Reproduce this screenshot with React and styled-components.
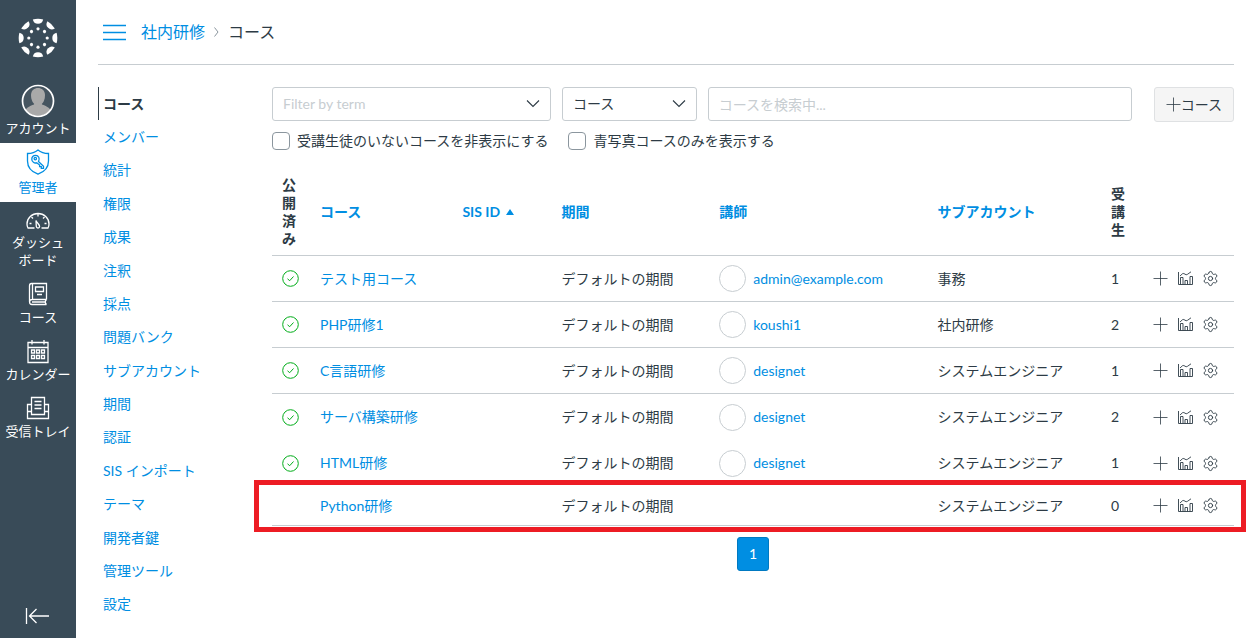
import React from 'react';
import styled, { createGlobalStyle, css } from 'styled-components';
import { Settings } from 'lucide-react';

const GlobalStyle = createGlobalStyle`
  * {
    box-sizing: border-box;
  }

  body {
    margin: 0;
    background: #fff;
    color: #2d3b45;
    font-family: Lato, "Noto Sans CJK JP", sans-serif;
    font-size: 14px;
    line-height: 18px;
  }

  a {
    color: #008ee2;
    text-decoration: none;
  }

  button, input, select {
    font: inherit;
    color: inherit;
  }
`;

const Page = styled.div`
  display: flex;
  min-height: 100vh;
`;

const GlobalNav = styled.nav`
  display: flex;
  flex-direction: column;
  flex: 0 0 76px;
  background: #394b58;
`;

const LogoLink = styled.a`
  display: flex;
  align-items: center;
  justify-content: center;
  height: 78px;
  padding-bottom: 2px;
`;

const GlobalNavLink = styled.a`
  display: flex;
  flex-direction: column;
  align-items: center;
  gap: 1px;
  padding: 6px 0;
  color: ${({ $active }) => ($active ? '#008ee2' : '#fff')};
  background: ${({ $active }) => ($active ? '#fff' : 'transparent')};
  font-size: 13px;
  text-align: center;
`;

const NavLabel = styled.span`
  white-space: pre-line;
`;

const CollapseButton = styled.button`
  display: flex;
  align-items: center;
  justify-content: center;
  height: 44px;
  margin-top: auto;
  padding: 0;
  border: 0;
  background: transparent;
  color: #fff;
`;

const Main = styled.div`
  display: flex;
  flex-direction: column;
  flex: 1;
  min-width: 0;
  padding: 0 22px;
`;

const Header = styled.header`
  display: flex;
  align-items: center;
  height: 65px;
  padding-left: 5px;
  border-bottom: 1px solid #c7cdd1;
`;

const MenuButton = styled.button`
  display: flex;
  padding: 0;
  border: 0;
  background: transparent;
  color: #008ee2;
`;

const Breadcrumbs = styled.nav`
  display: flex;
  align-items: center;
  gap: 9px;
  margin-left: 15px;
  font-size: 16px;
`;

const Body = styled.div`
  display: flex;
  flex: 1;
  padding: 22px 0 17px;
`;

const SectionNav = styled.nav`
  display: flex;
  flex-direction: column;
  flex: 0 0 174px;
`;

const SectionLink = styled.a`
  display: flex;
  align-items: center;
  flex: 1 1 33px;
  max-height: 34px;
  padding-left: 5px;
  ${({ $active }) => $active && css`
    padding-left: 4px;
    border-left: 1px solid #2d3b45;
    color: #2d3b45;
    font-weight: bold;
  `}
`;

const Content = styled.main`
  flex: 1;
  min-width: 0;
`;

const Filters = styled.form`
  display: flex;
  gap: 11px;
`;

const SelectBox = styled.div`
  position: relative;
  flex: 0 0 ${({ $basis }) => $basis};

  svg {
    position: absolute;
    top: 12px;
    right: 11px;
    pointer-events: none;
  }
`;

const field = css`
  width: 100%;
  height: 34px;
  padding: 0 10px;
  border: 1px solid #c7cdd1;
  border-radius: 3px;
  background: #fff;
`;

const Select = styled.select`
  ${field}
  appearance: none;
  color: ${({ $empty }) => ($empty ? '#c7cdd1' : '#2d3b45')};
`;

const SearchInput = styled.input`
  ${field}
  flex: 1;
  min-width: 0;

  &::placeholder {
    color: #c7cdd1;
    opacity: 1;
  }
`;

const AddButton = styled.button`
  display: flex;
  align-items: center;
  height: 35px;
  margin-left: 11px;
  padding: 0 11px;
  border: 1px solid #dfe1e3;
  border-radius: 3px;
  background: #f5f5f5;
  white-space: nowrap;
`;

const Checks = styled.div`
  display: flex;
  gap: 20px;
  margin-top: 10px;
`;

const CheckLabel = styled.label`
  display: flex;
  align-items: center;
  gap: 7px;
`;

const Checkbox = styled.input`
  appearance: none;
  width: 18px;
  height: 18px;
  margin: 0;
  border: 1px solid #8b969e;
  border-radius: 4px;
  background: #fff;
`;

const Table = styled.table`
  width: 100%;
  margin-top: 18px;
  border-spacing: 0;
  table-layout: fixed;
`;

const Col = styled.col`
  width: ${({ $width }) => $width};
`;

const Th = styled.th`
  height: 88px;
  padding: 0 10px;
  border-bottom: 1px solid #c7cdd1;
  text-align: left;
`;

const Row = styled.tr`
  position: relative;
  height: ${({ $short }) => ($short ? '40px' : '46px')};
`;

const Td = styled.td`
  padding: 0 10px;
  border-bottom: ${({ $line }) => ($line ? '1px solid #c7cdd1' : '0')};
  white-space: nowrap;
`;

const SortLink = styled.a`
  display: inline-flex;
  align-items: center;
  gap: 6px;
`;

const Teacher = styled.a`
  display: flex;
  align-items: center;
  gap: 7px;
`;

const Avatar = styled.span`
  width: 27px;
  height: 27px;
  border: 1px solid #c7cdd1;
  border-radius: 50%;
`;

const Actions = styled.div`
  display: flex;
  align-items: center;
  gap: 9px;
`;

const IconButton = styled.button`
  display: flex;
  padding: 0;
  border: 0;
  background: transparent;
`;

const Highlight = styled.div`
  position: absolute;
  top: -6px;
  right: -12px;
  bottom: -6px;
  left: -18px;
  border: 5px solid #ed1c24;
  pointer-events: none;
`;

const Pager = styled.nav`
  display: flex;
  justify-content: center;
  margin-top: 11px;
`;

const PageButton = styled.button`
  width: 32px;
  height: 34px;
  padding: 0;
  border: 1px solid #0079c1;
  border-radius: 3px;
  background: #008ee2;
  color: #fff;
`;

const spokes = [0, 45, 90, 135, 180, 225, 270, 315];

const Logo = () => (
  <svg width="40" height="40" viewBox="-20 -20 40 40" fill="#fff">
    {spokes.map(a => (
      <g key={a} transform={`rotate(${a})`}>
        <path d="M-5.2 -18.6A19.3 19.3 0 0 1 5.2 -18.6A5.3 5.3 0 0 1 -5.2 -18.6Z" />
        <circle cy="-9.2" r="1.6" />
      </g>
    ))}
  </svg>
);

const AccountIcon = () => (
  <svg width="34" height="34" viewBox="0 0 34 34">
    <clipPath id="face"><circle cx="17" cy="17" r="15" /></clipPath>
    <circle cx="17" cy="17" r="15" fill="#465560" />
    <g clipPath="url(#face)" fill="#a9a9a9">
      <path d="M10 11C10 1.500 24 1.500 24 11C24 16 22 21 17 21C12 21 10 16 10 11Z" />
      <path d="M2 32C3 24 9 22 13 20.500L14 17H20L21 20.500C25 22 31 24 32 32Z" />
    </g>
    <circle cx="17" cy="17" r="15.500" fill="none" stroke="#fff" strokeWidth="1.700" />
  </svg>
);

const NavIcon = ({ height = 26, children }) => (
  <svg width="26" height={height} viewBox={`0 0 26 ${height}`} fill="none" stroke="currentColor" strokeWidth="1.300">
    {children}
  </svg>
);

const ShieldIcon = () => (
  <NavIcon height={28}>
    <path d="M13 1C10 3.500 6 4.500 2.500 4.500V12C2.500 18.500 7 23 13 25.200C19 23 23.500 18.500 23.500 12V4.500C20 4.500 16 3.500 13 1Z" />
    <path d="M13.500 12.600L18.500 17.200V19.300H16.300V17.600H14.600V16L11.700 13.800C9.500 14.600 6.800 12.800 6.800 10.200C6.800 7.800 8.600 6.300 10.700 6.300C13.500 6.300 15.200 9.500 13.500 12.600Z" />
    <circle cx="10.300" cy="9.600" r="1.200" />
  </NavIcon>
);

const DashboardIcon = () => (
  <NavIcon height={24}>
    <path d="M9.500 20H3C2.300 19 2 17.500 2 16C2 10 7 5.500 13 5.500S24 10 24 16C24 17.500 23.700 19 23 20H16.500" />
    <path d="M11 12.500L11.300 18.500C11.500 20.500 14.500 20.500 14.600 18.500C14.700 17 12.500 15.500 11 12.500Z" />
    <path d="M13 6V8.500M6.500 9L8 10.500M19.500 9L18 10.500M4.500 15.500H6.500M21.500 15.500H19.500" />
  </NavIcon>
);

const BookIcon = () => (
  <NavIcon>
    <path d="M21.500 18.500V2.500H6.500C5 2.500 4.500 3.500 4.500 5V20.500C4.500 22.500 5.500 23.500 7 23.500H21.500M21.500 18.500H7C3.800 18.500 3.800 23.500 7 23.500M21.500 18.500C20 20 20 22 21.500 23.500M7.500 2.500V18.500M7 21H20" />
    <path d="M10.500 6H18.500V10.500H10.500ZM12 13.500H17" />
  </NavIcon>
);

const CalendarIcon = () => (
  <NavIcon>
    <path d="M3 4.500H23V24.500H3ZM3 9.500H23M7 2V6.500M19 2V6.500" />
    <path d="M6.500 12H9.500V15H6.500ZM11.500 12H14.500V15H11.500ZM16.500 12H19.500V15H16.500ZM6.500 17.500H9.500V20.500H6.500ZM11.500 17.500H14.500V20.500H11.500ZM16.500 17.500H19.500V20.500H16.500Z" />
  </NavIcon>
);

const InboxIcon = () => (
  <NavIcon>
    <path d="M6.500 16V2.500H19.500V16M9.500 6.500H16.500M9.500 10H16.500M9.500 13.500H16.500" />
    <path d="M6.500 9.500H2.500V23.500H23.500V9.500H19.500M2.500 16.500H6.500V19.500H19.500V16.500H23.500" />
  </NavIcon>
);

const CollapseIcon = () => (
  <svg width="26" height="18" viewBox="0 0 26 18" fill="none" stroke="currentColor" strokeWidth="1.300">
    <path d="M1.500 1V17M24 9H4.500M11.500 2L4.500 9L11.500 16" />
  </svg>
);

const MenuIcon = () => (
  <svg width="23" height="17" viewBox="0 0 23 17" stroke="currentColor" strokeWidth="1.300">
    <path d="M0 1.500H23M0 8.500H23M0 15.500H23" />
  </svg>
);

const CrumbArrow = () => (
  <svg width="5" height="10" viewBox="0 0 5 10" fill="none" stroke="#8b969e">
    <path d="M0.500 0.500L4 5L0.500 9.500" />
  </svg>
);

const Chevron = () => (
  <svg width="14" height="10" viewBox="0 0 14 10" fill="none" stroke="#2d3b45" strokeWidth="1.100">
    <path d="M1 1.500L7 7.500L13 1.500" />
  </svg>
);

const PlusIcon = () => (
  <svg width="15" height="15" viewBox="0 0 15 15" stroke="currentColor" strokeWidth="0.800">
    <path d="M7.500 0.500V14.500M0.500 7.500H14.500" />
  </svg>
);

const StatsIcon = () => (
  <svg width="16" height="15" viewBox="0 0 16 15" fill="none" stroke="currentColor" strokeWidth="0.900">
    <path d="M1.500 1V13.500H15.500V5.500H13V13.500M3.500 13.500V6.500H6V13.500M8 13.500V9.500H10.500V13.500M3 5L5.500 2.700C7.500 1.500 8.500 5 10.500 3.300L14 0.800" />
  </svg>
);

const PublishedIcon = () => (
  <svg width="17" height="17" viewBox="0 0 17 17" fill="none" stroke="#00ac18" display="block">
    <circle cx="8.500" cy="8.500" r="7.800" />
    <path d="M5.500 8.800L7.700 10.700L11.500 6.500" />
  </svg>
);

const SortArrow = () => (
  <svg width="8" height="6" viewBox="0 0 8 6" fill="currentColor">
    <path d="M4 0L8 6H0Z" />
  </svg>
);

const globalLinks = [
  { label: 'アカウント', icon: AccountIcon },
  { label: '管理者', icon: ShieldIcon, active: true },
  { label: 'ダッシュ\nボード', icon: DashboardIcon },
  { label: 'コース', icon: BookIcon },
  { label: 'カレンダー', icon: CalendarIcon },
  { label: '受信トレイ', icon: InboxIcon },
];

const sectionLinks = [
  'コース', 'メンバー', '統計', '権限', '成果', '注釈', '採点', '問題バンク',
  'サブアカウント', '期間', '認証', 'SIS インポート', 'テーマ', '開発者鍵', '管理ツール', '設定',
];

const colWidths = ['38px', '14.8%', '10.3%', '16.4%', '22.7%', 'auto', '42px', '91px'];

const courses = [
  { name: 'テスト用コース', teacher: 'admin@example.com', account: '事務', students: 1, published: true, line: true },
  { name: 'PHP研修1', teacher: 'koushi1', account: '社内研修', students: 2, published: true, line: true },
  { name: 'C言語研修', teacher: 'designet', account: 'システムエンジニア', students: 1, published: true, line: true },
  { name: 'サーバ構築研修', teacher: 'designet', account: 'システムエンジニア', students: 2, published: true },
  { name: 'HTML研修', teacher: 'designet', account: 'システムエンジニア', students: 1, published: true },
  { name: 'Python研修', account: 'システムエンジニア', students: 0, line: true, highlighted: true },
];

const CourseRow = ({ course }) => {
  const {
    name, teacher, account, students, published, line, highlighted,
  } = course;

  return (
    <Row $short={highlighted}>
      <Td $line={line}>{published && <PublishedIcon />}</Td>
      <Td $line={line}><a href="#course">{name}</a></Td>
      <Td $line={line} />
      <Td $line={line}>デフォルトの期間</Td>
      <Td $line={line}>
        {teacher && (
          <Teacher href="#teacher">
            <Avatar />
            {teacher}
          </Teacher>
        )}
      </Td>
      <Td $line={line}>{account}</Td>
      <Td $line={line}>{students}</Td>
      <Td $line={line}>
        <Actions>
          <IconButton type="button" aria-label="ユーザーを追加"><PlusIcon /></IconButton>
          <IconButton type="button" aria-label="統計"><StatsIcon /></IconButton>
          <IconButton type="button" aria-label="設定"><Settings size={17} strokeWidth={1.300} /></IconButton>
        </Actions>
        {highlighted && <Highlight />}
      </Td>
    </Row>
  );
};

const App = () => (
  <Page>
    <GlobalStyle />
    <GlobalNav>
      <LogoLink href="#home" aria-label="ホーム"><Logo /></LogoLink>
      {globalLinks.map(({ label, icon: Icon, active }) => (
        <GlobalNavLink key={label} href="#nav" $active={active}>
          <Icon />
          <NavLabel>{label}</NavLabel>
        </GlobalNavLink>
      ))}
      <CollapseButton type="button" aria-label="ナビゲーションを最小化"><CollapseIcon /></CollapseButton>
    </GlobalNav>
    <Main>
      <Header>
        <MenuButton type="button" aria-label="メニュー"><MenuIcon /></MenuButton>
        <Breadcrumbs>
          <a href="#account">社内研修</a>
          <CrumbArrow />
          <span>コース</span>
        </Breadcrumbs>
      </Header>
      <Body>
        <SectionNav>
          {sectionLinks.map((label, i) => (
            <SectionLink key={label} href="#section" $active={i === 0}>{label}</SectionLink>
          ))}
        </SectionNav>
        <Content>
          <Filters>
            <SelectBox $basis="29%">
              <Select $empty aria-label="期間でフィルタ" defaultValue="">
                <option value="">Filter by term</option>
              </Select>
              <Chevron />
            </SelectBox>
            <SelectBox $basis="14%">
              <Select aria-label="検索対象">
                <option>コース</option>
              </Select>
              <Chevron />
            </SelectBox>
            <SearchInput type="text" aria-label="コースを検索" placeholder="コースを検索中..." />
            <AddButton type="button">
              <PlusIcon />
              コース
            </AddButton>
          </Filters>
          <Checks>
            <CheckLabel>
              <Checkbox type="checkbox" />
              受講生徒のいないコースを非表示にする
            </CheckLabel>
            <CheckLabel>
              <Checkbox type="checkbox" />
              青写真コースのみを表示する
            </CheckLabel>
          </Checks>
          <Table>
            <colgroup>
              {colWidths.map((width, i) => <Col key={i} $width={width} />)}
            </colgroup>
            <thead>
              <tr>
                <Th>公開済み</Th>
                <Th><SortLink href="#sort">コース</SortLink></Th>
                <Th>
                  <SortLink href="#sort">
                    SIS ID
                    <SortArrow />
                  </SortLink>
                </Th>
                <Th><SortLink href="#sort">期間</SortLink></Th>
                <Th><SortLink href="#sort">講師</SortLink></Th>
                <Th><SortLink href="#sort">サブアカウント</SortLink></Th>
                <Th>受講生</Th>
                <Th />
              </tr>
            </thead>
            <tbody>
              {courses.map(course => <CourseRow key={course.name} course={course} />)}
            </tbody>
          </Table>
          <Pager>
            <PageButton type="button">1</PageButton>
          </Pager>
        </Content>
      </Body>
    </Main>
  </Page>
);

export default App;
